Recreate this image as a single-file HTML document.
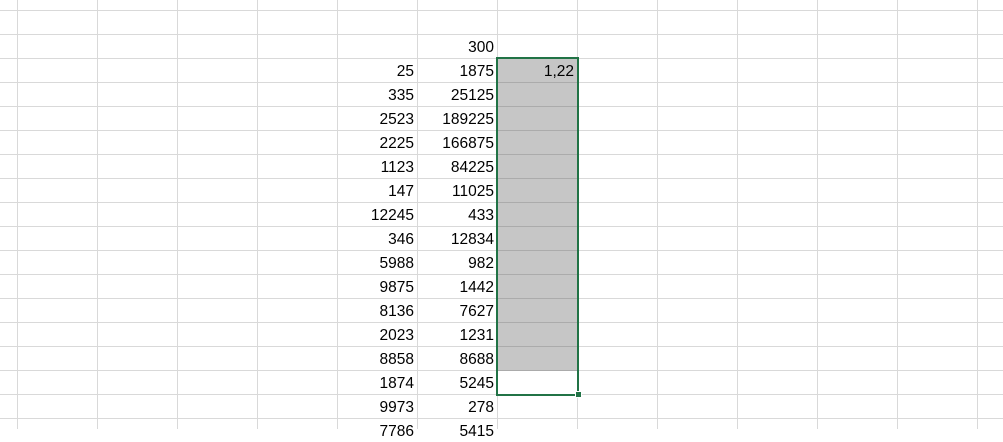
<!DOCTYPE html>
<html><head><style>
body{margin:0;width:1003px;height:429px;overflow:hidden;background:#fff;position:relative;font-family:"Liberation Sans",sans-serif;font-size:15.5px;color:#000}
.v{position:absolute;top:0;width:1px;height:429px;background:#d9d9d9}
.h{position:absolute;left:0;height:1px;width:1003px;background:#d9d9d9}
.t{position:absolute;width:77px;text-align:right;line-height:20px;height:20px}
.g{position:absolute;left:498px;width:79px;background:#c6c6c6}
</style></head><body>
<div id="grid"></div>
<script>
(function(){
var s='';
for(var x=17;x<1003;x+=80)s+='<div class="v" style="left:'+x+'px"></div>';
for(var y=10;y<429;y+=24)s+='<div class="h" style="top:'+y+'px"></div>';
s+='<div class="g" style="top:59px;height:311px"></div>';
for(var y2=82;y2<=370;y2+=24)s+='<div style="position:absolute;left:498px;width:79px;height:1px;top:'+y2+'px;background:#ababab"></div>';
var a=[null,25,335,2523,2225,1123,147,12245,346,5988,9875,8136,2023,8858,1874,9973,7786];
var c=[300,1875,25125,189225,166875,84225,11025,433,12834,982,1442,7627,1231,8688,5245,278,5415];
for(var i=0;i<c.length;i++){var tp=34+24*i+4;
if(a[i]!=null)s+='<div class="t" style="left:337px;top:'+tp+'px">'+a[i]+'</div>';
s+='<div class="t" style="left:417px;top:'+tp+'px">'+c[i]+'</div>';}
s+='<div class="t" style="left:497px;top:62px">1,22</div>';
s+='<div style="position:absolute;left:496px;top:57px;width:79px;height:335px;border:2px solid #217346"></div>';
s+='<div style="position:absolute;left:575px;top:391px;width:5px;height:5px;background:#217346;border:1px solid #fff"></div>';
document.getElementById('grid').innerHTML=s;
})();
</script>
</body></html>
